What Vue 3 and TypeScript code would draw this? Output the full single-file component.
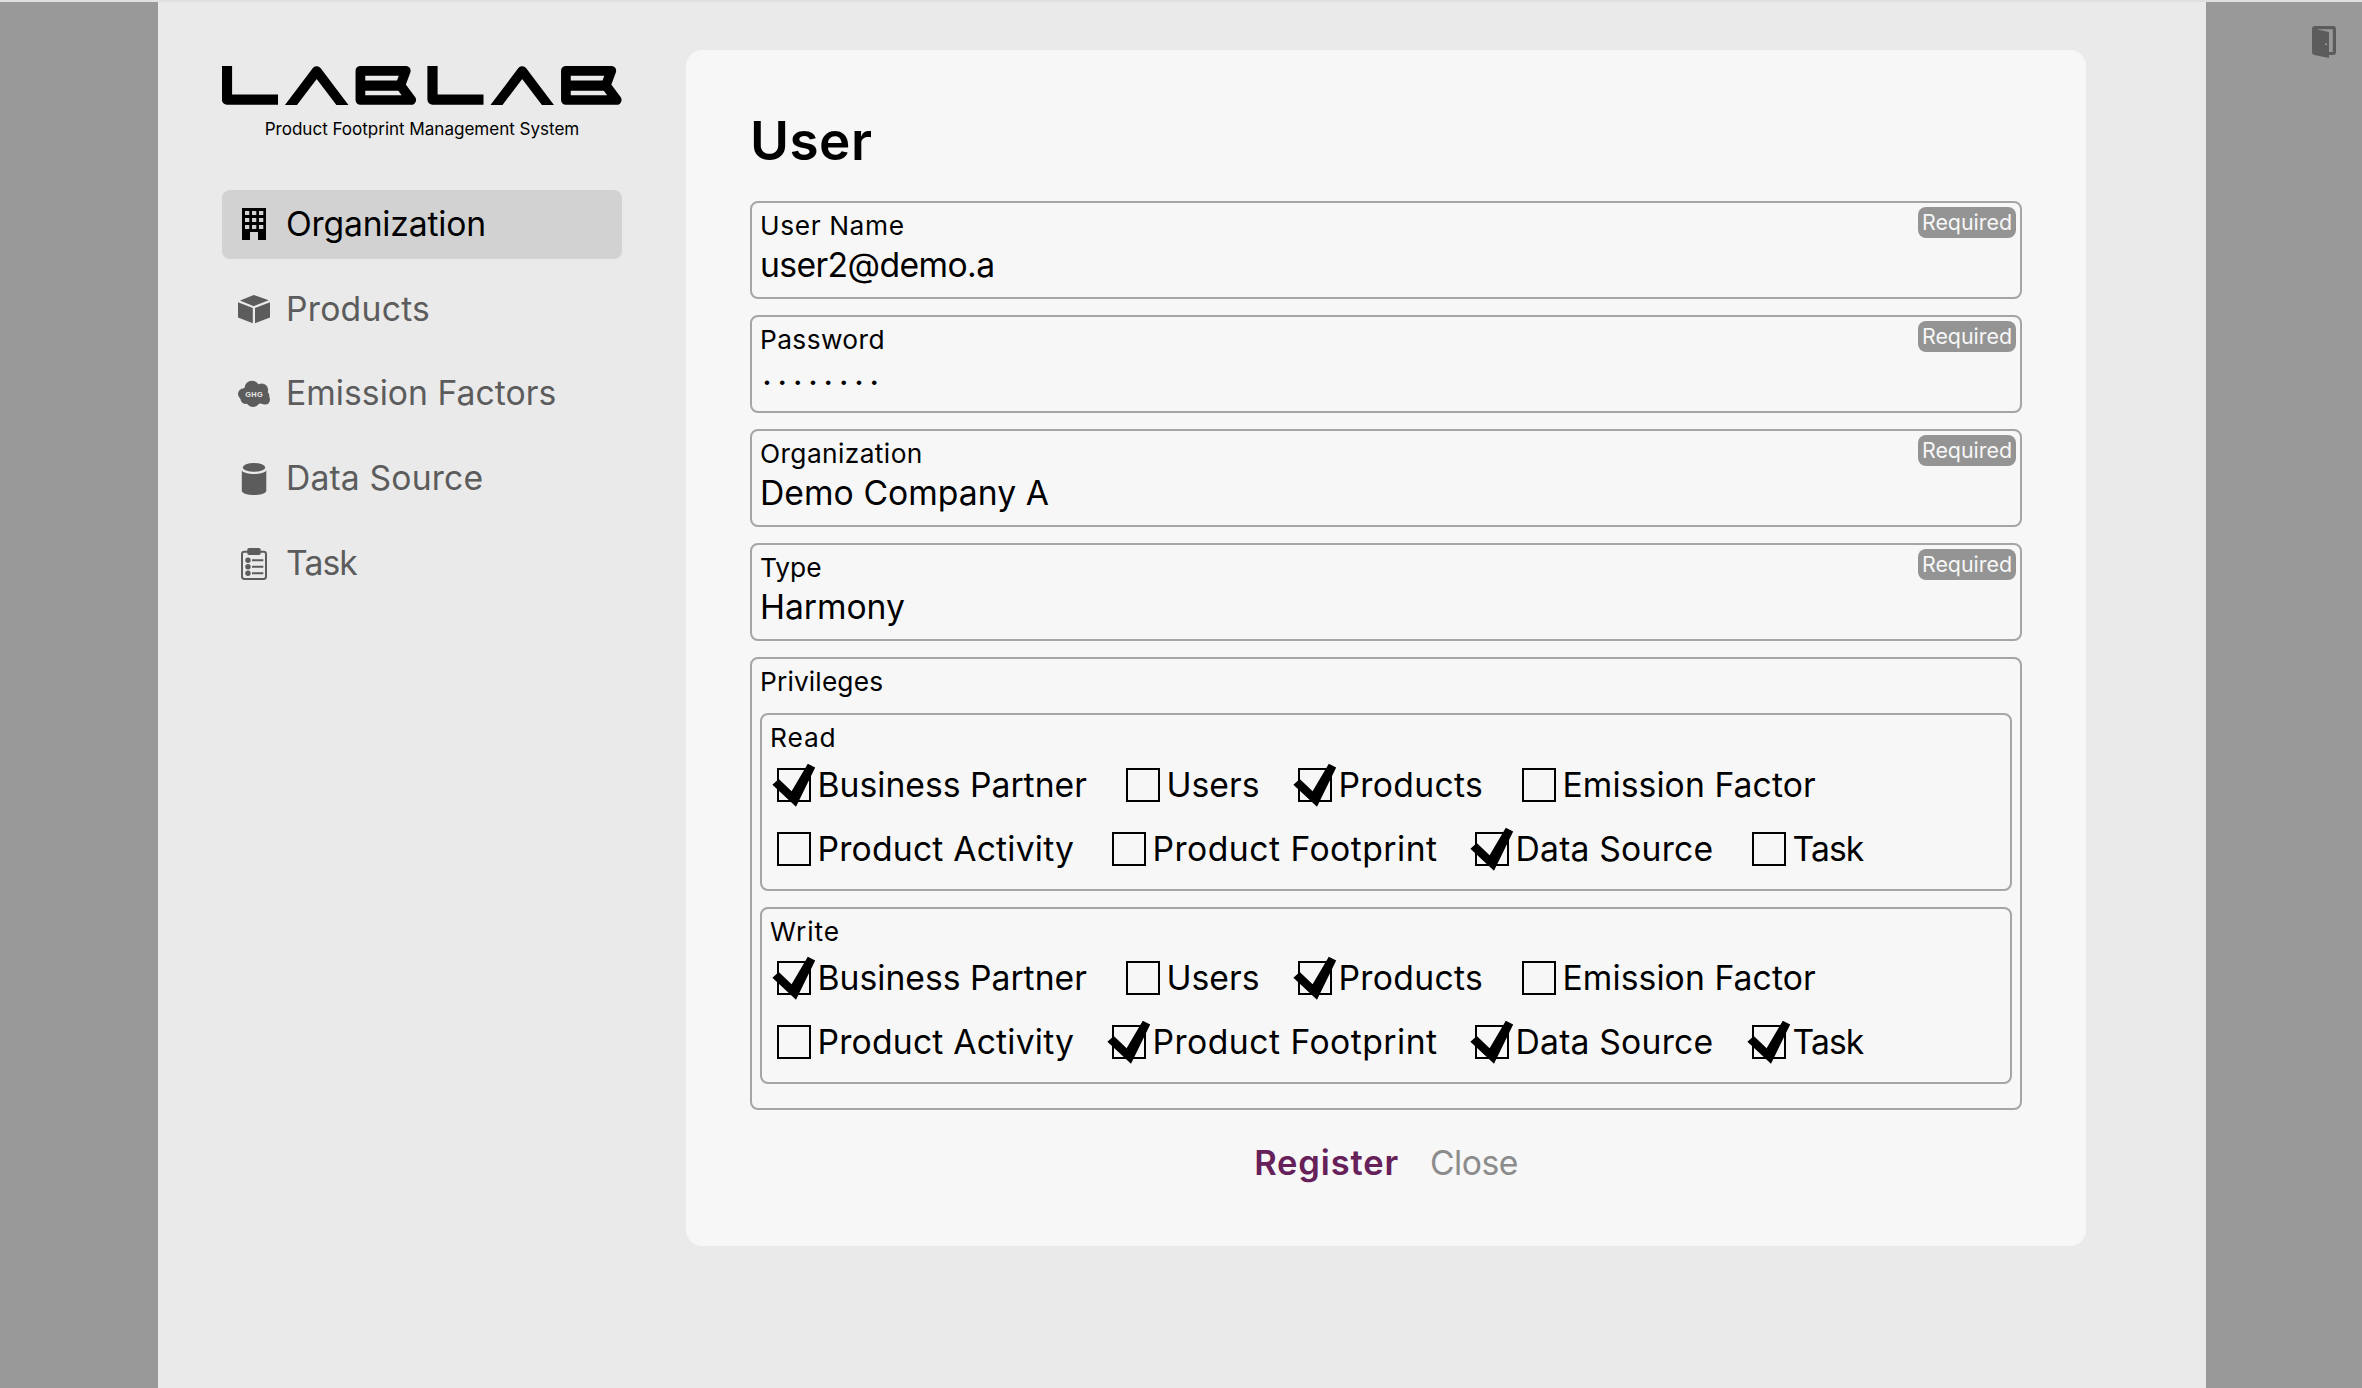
<script setup lang="ts">
interface MenuItem {
  icon: 'building' | 'box' | 'cloud' | 'database' | 'clipboard'
  label: string
  tracking: number
  active?: boolean
}

interface Field {
  label: string
  labelTracking: number
  value: string
  tracking: number
  secret?: boolean
}

interface Option {
  label: string
  tracking: number
  width: number
}

interface Group {
  name: string
  tracking: number
  checked: string[]
}

const menu: MenuItem[] = [
  { icon: 'building', label: 'Organization', tracking: -0.2, active: true },
  { icon: 'box', label: 'Products', tracking: 0.25 },
  { icon: 'cloud', label: 'Emission Factors', tracking: 0.03 },
  { icon: 'database', label: 'Data Source', tracking: 0.15 },
  { icon: 'clipboard', label: 'Task', tracking: -0.9 },
]

const fields: Field[] = [
  { label: 'User Name', labelTracking: 0.62, value: 'user2@demo.a', tracking: -0.6 },
  { label: 'Password', labelTracking: 0.4, value: '••••••••', tracking: 0, secret: true },
  { label: 'Organization', labelTracking: 0.4, value: 'Demo Company A', tracking: 0.05 },
  { label: 'Type', labelTracking: 0, value: 'Harmony', tracking: -0.05 },
]

const rows: Option[][] = [
  [
    { label: 'Business Partner', tracking: 0, width: 349 },
    { label: 'Users', tracking: 0, width: 172 },
    { label: 'Products', tracking: 0.3, width: 224 },
    { label: 'Emission Factor', tracking: 0.08, width: 300 },
  ],
  [
    { label: 'Product Activity', tracking: 0.2, width: 335 },
    { label: 'Product Footprint', tracking: 0.47, width: 363 },
    { label: 'Data Source', tracking: 0.2, width: 277 },
    { label: 'Task', tracking: -0.9, width: 120 },
  ],
]

const groups: Group[] = [
  { name: 'Read', tracking: 0.9, checked: ['Business Partner', 'Products', 'Data Source'] },
  {
    name: 'Write',
    tracking: 0.9,
    checked: ['Business Partner', 'Products', 'Product Footprint', 'Data Source', 'Task'],
  },
]
</script>

<template>
  <div class="page">
    <div class="shell">
      <aside class="sidebar">
        <svg class="logo" viewBox="0 0 400 39" role="img" aria-label="LABLAB">
          <g v-for="x in [0, 205.5]" :key="x" :transform="`translate(${x} 0)`" class="mark">
            <polyline points="5,0 5,33.6 56,33.6" stroke-width="10.2" />
            <polyline points="61.4,49 94.7,5 128,49" stroke-width="9.6" />
            <polygon points="138.4,4.8 183.8,4.8 178.4,19.4 189.2,34 138.4,34" stroke-width="9.7" />
            <line x1="138" y1="19.6" x2="180" y2="19.6" stroke-width="10.2" />
          </g>
        </svg>
        <p class="tagline">Product Footprint Management System</p>
        <nav class="menu">
          <a v-for="item in menu" :key="item.label" class="item" :class="{ active: item.active }">
            <svg class="icon" viewBox="0 0 32 32">
              <path
                v-if="item.icon === 'building'"
                fill-rule="evenodd"
                d="M4 0h24v32h-8v-8h-8v8H4zM7 3v4h4.3V3zM14 3v4h4.3V3zM21 3v4h4.3V3zM7 10v4h4.3v-4zM14 10v4h4.3v-4zM21 10v4h4.3v-4zM7 17v4h4.3v-4zM14 17v4h4.3v-4zM21 17v4h4.3v-4z"
              />
              <path
                v-else-if="item.icon === 'box'"
                d="M15.8 2 30.7 7.3 15.8 13.2 2 7.5zM0 9.3 14.8 15v15.3L0 24.5zM17 15l15-5.7v15.2l-15 5.8z"
              />
              <g v-else-if="item.icon === 'cloud'">
                <circle cx="14" cy="10.4" r="7.6" />
                <circle cx="5.8" cy="16" r="5.8" />
                <circle cx="23.6" cy="12" r="6.6" />
                <circle cx="26.2" cy="18" r="5.2" />
                <circle cx="27" cy="21.6" r="5" />
                <circle cx="15" cy="22" r="6.9" />
                <circle cx="7.6" cy="20.6" r="5.2" />
                <rect x="6" y="10" width="20" height="15.6" />
                <text x="16.1" y="18.8" class="ghg">GHG</text>
              </g>
              <g v-else-if="item.icon === 'database'">
                <ellipse cx="16" cy="4.4" rx="11.2" ry="4.4" />
                <path d="M3.8 7.2C6 12.3 26 12.3 28.3 7.2V28c-1.5 5.3-23 5.3-24.5 0z" />
              </g>
              <g v-else>
                <rect class="line" x="4" y="3.7" width="24" height="27.3" rx="2.4" />
                <rect x="9.3" y="0" width="13.4" height="7" rx="1.8" />
                <circle cx="10" cy="12.3" r="2.7" />
                <circle cx="10" cy="18.8" r="2.7" />
                <circle cx="10" cy="25.3" r="2.7" />
                <path class="line" d="M14 12.3h11.3M14 18.8h11.3M14 25.3h11.3" />
              </g>
            </svg>
            <span class="name" :style="{ letterSpacing: `${item.tracking}px` }">{{ item.label }}</span>
          </a>
        </nav>
      </aside>

      <main class="card">
        <h1>User</h1>
        <form class="form">
          <div v-for="field in fields" :key="field.label" class="field">
            <div class="label" :style="{ letterSpacing: `${field.labelTracking}px` }">{{ field.label }}</div>
            <div v-if="field.secret" class="value secret">{{ field.value }}</div>
            <div v-else class="value" :style="{ letterSpacing: `${field.tracking}px` }">{{ field.value }}</div>
            <span class="required">Required</span>
          </div>

          <div class="field privileges">
            <div class="label plain">Privileges</div>
            <section v-for="group in groups" :key="group.name" class="group">
              <div class="label" :style="{ letterSpacing: `${group.tracking}px` }">{{ group.name }}</div>
              <div class="options">
                <div v-for="(row, i) in rows" :key="i" class="row">
                  <label
                    v-for="option in row"
                    :key="option.label"
                    class="option"
                    :style="{ width: `${option.width}px` }"
                  >
                    <span class="check">
                      <svg v-if="group.checked.includes(option.label)" viewBox="-6 -6 46 46">
                        <path d="M-4.6 16.7 1.8 11 14.6 23.3 30.8-4.2 38.2-.6 19 38.7z" />
                      </svg>
                    </span>
                    <span class="name" :style="{ letterSpacing: `${option.tracking}px` }">{{ option.label }}</span>
                  </label>
                </div>
              </div>
            </section>
          </div>
        </form>
        <div class="actions">
          <a class="register">Register</a>
          <a class="close">Close</a>
        </div>
      </main>
    </div>

    <svg class="exit" viewBox="0 0 24 32">
      <path
        fill-rule="evenodd"
        d="M3 0h18a3 3 0 0 1 3 3v23a3 3 0 0 1-3 3h-4v3L2.5 29A3 3 0 0 1 0 26V3A3 3 0 0 1 3 0zM4.5 3.2 17 6v20h3.8V3.2zM14 17.2a1 1 0 1 0 0 2 1 1 0 0 0 0-2z"
      />
    </svg>
  </div>
</template>

<style>
body {
  margin: 0;
  background: #999;
}
</style>

<style scoped>
.page {
  box-sizing: border-box;
  position: relative;
  width: 2362px;
  height: 1388px;
  overflow: hidden;
  border-top: 2px solid #e0e0e0;
  background: #999;
  color: #000;
  font-family: Inter, 'Liberation Sans', sans-serif;
  font-size: 33.7px;
}

.shell {
  box-sizing: border-box;
  display: flex;
  align-items: flex-start;
  gap: 64px;
  width: 2048px;
  height: 100%;
  margin-left: 158px;
  padding: 48px 0 0 64px;
  background: #eaeaea;
}

.sidebar {
  width: 400px;
  padding-top: 16px;
}

.logo {
  display: block;
  width: 400px;
  height: 39px;
}

.mark {
  fill: none;
  stroke: #000;
  stroke-linejoin: round;
}

.tagline {
  margin: 11px 0 49px;
  font-size: 17.1px;
  line-height: 25px;
  letter-spacing: -0.04px;
  text-align: center;
  white-space: nowrap;
}

.menu {
  display: flex;
  flex-direction: column;
  gap: 16px;
}

.item {
  box-sizing: border-box;
  display: flex;
  align-items: center;
  gap: 16px;
  height: 68.8px;
  padding: 0 16px;
  border-radius: 8px;
  color: #5c5c5c;
  white-space: nowrap;
}

.item.active {
  background: #d2d2d2;
  color: #000;
}

.icon {
  flex: none;
  width: 32px;
  height: 32px;
  fill: currentColor;
}

.icon .line {
  fill: none;
  stroke: currentColor;
  stroke-width: 2;
}

.name {
  padding-bottom: 2px;
}

.ghg {
  fill: #eaeaea;
  font-family: 'Liberation Sans', sans-serif;
  font-size: 7.4px;
  font-weight: bold;
  letter-spacing: 0.3px;
  text-anchor: middle;
}

.card {
  box-sizing: border-box;
  width: 1400px;
  height: 1196px;
  padding: 65px 64px 64px;
  border-radius: 16px;
  background: #f7f7f7;
}

h1 {
  margin: 0 0 33px;
  font-size: 53px;
  font-weight: 600;
  line-height: 53px;
  letter-spacing: 0.5px;
}

.form {
  display: flex;
  flex-direction: column;
  gap: 16px;
}

.field {
  box-sizing: border-box;
  position: relative;
  height: 98px;
  padding: 5px 8px;
  border: 2px solid #a5a5a5;
  border-radius: 8px;
}

.label {
  font-size: 26.3px;
  line-height: 36px;
}

.label.plain {
  letter-spacing: 0.15px;
}

.value {
  line-height: 41px;
}

.secret {
  padding-left: 4px;
  font-family: 'Liberation Sans', sans-serif;
  font-size: 17px;
  line-height: 49px;
  letter-spacing: 9.38px;
}

.required {
  position: absolute;
  top: 4px;
  right: 4px;
  width: 98px;
  height: 31px;
  border-radius: 8px;
  background: #949494;
  color: #f7f7f7;
  font-size: 21.4px;
  line-height: 31px;
  text-align: center;
}

.privileges {
  height: 453px;
}

.group {
  box-sizing: border-box;
  height: 178px;
  margin-top: 13px;
  padding: 5px 8px;
  border: 2px solid #a5a5a5;
  border-radius: 8px;
}

.group + .group {
  height: 177px;
  margin-top: 16px;
}

.options {
  display: flex;
  flex-direction: column;
  gap: 30px;
  margin: 12px 0 0 7px;
}

.group + .group .options {
  margin-top: 11px;
}

.row {
  display: flex;
}

.option {
  display: flex;
  align-items: center;
  gap: 6.5px;
  height: 34px;
  white-space: nowrap;
}

.check {
  box-sizing: border-box;
  position: relative;
  flex: none;
  width: 34px;
  height: 34px;
  border: 2px solid #000;
}

.check svg {
  position: absolute;
  top: -8px;
  left: -8px;
  width: 46px;
  height: 46px;
}

.actions {
  display: flex;
  justify-content: center;
  gap: 31px;
  margin-top: 33px;
  line-height: 40px;
}

.register {
  color: #66205a;
  font-size: 34.5px;
  font-weight: 600;
  letter-spacing: 0.85px;
}

.close {
  color: #8c8c8c;
  letter-spacing: -0.5px;
}

.exit {
  position: absolute;
  top: 24px;
  right: 26px;
  width: 24px;
  height: 32px;
  fill: #5c5c5c;
}
</style>
